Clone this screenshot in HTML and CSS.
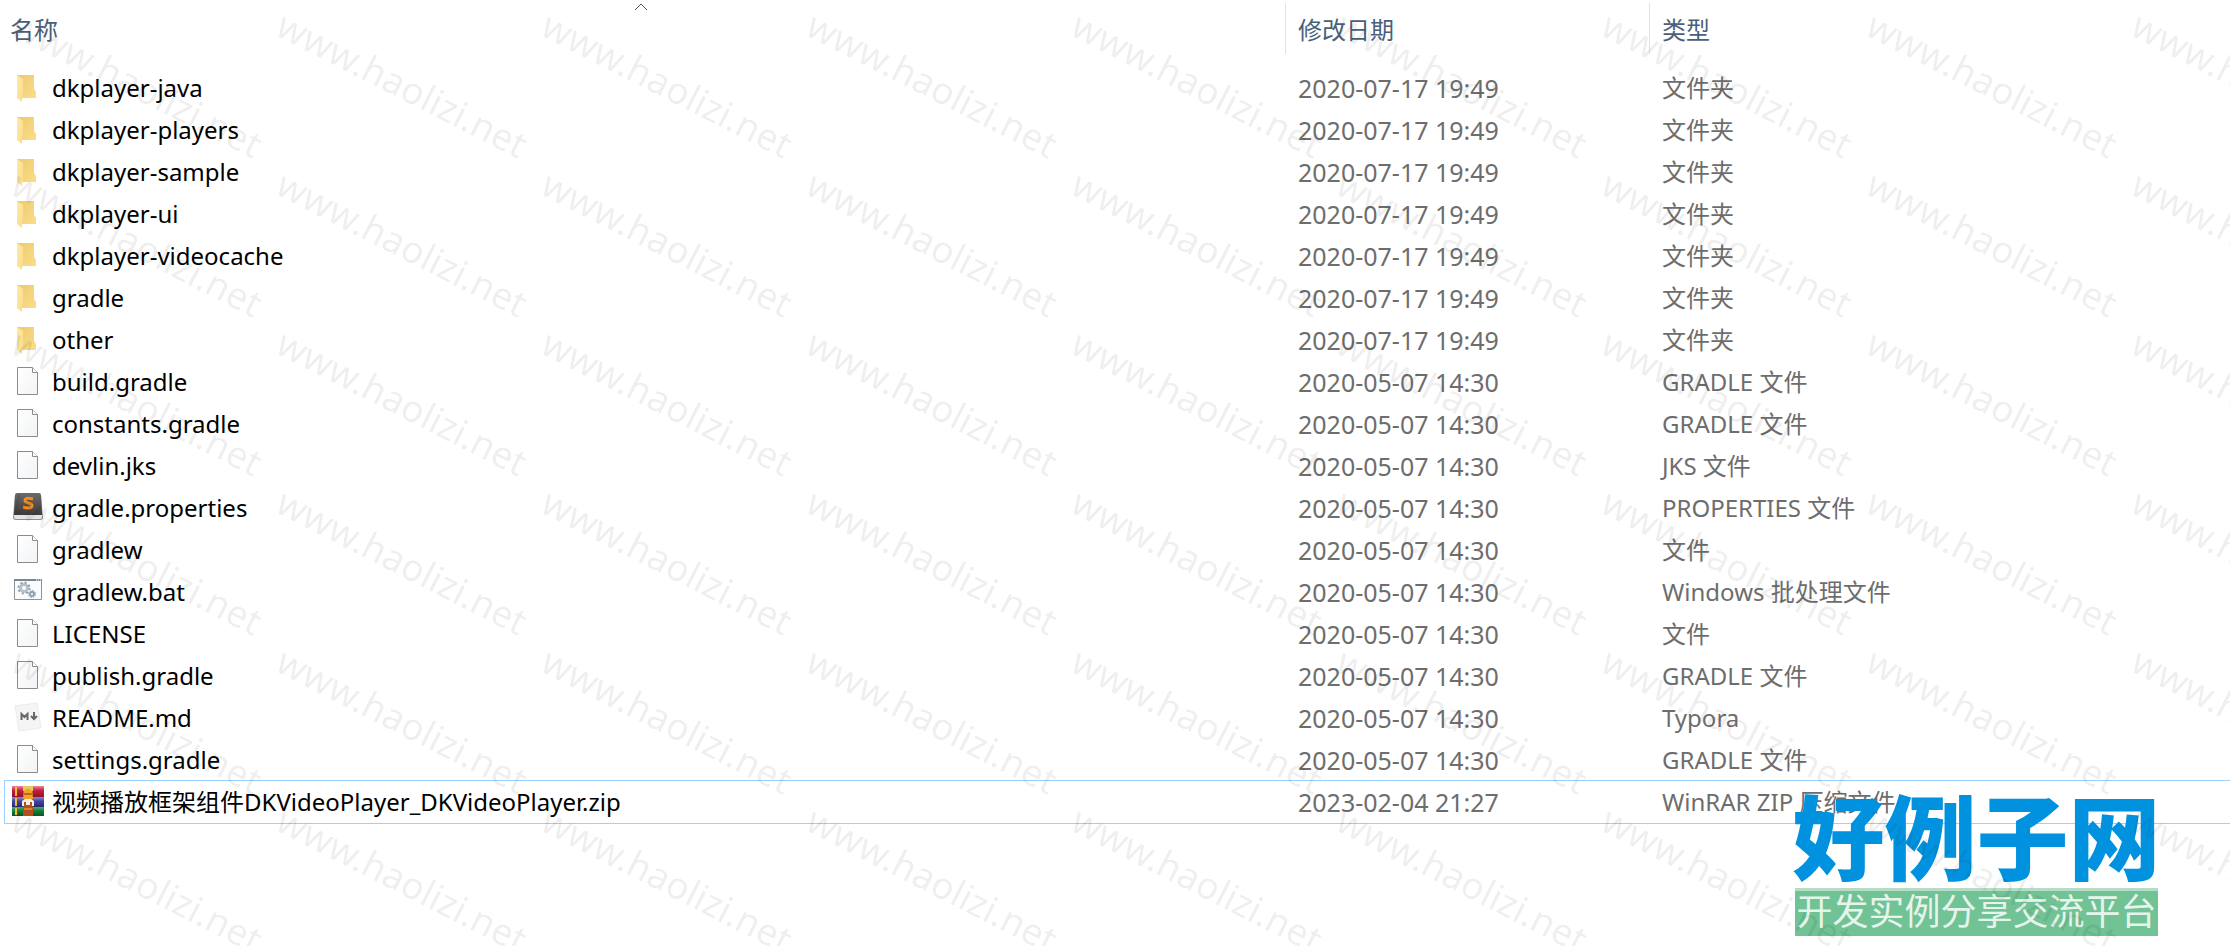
FILE: index.html
```html
<!DOCTYPE html>
<html lang="zh-CN">
<head>
  <meta charset="UTF-8" />
  <title>DKVideoPlayer</title>
  <link rel="stylesheet" href="styles.css">
</head>
<body>

  <!-- Icon shapes -->
  <svg class="sprite" aria-hidden="true">
    <defs>
      <linearGradient id="folder-back" x1="0" y1="0" x2="1" y2="1">
        <stop offset="0" stop-color="#eccb6d" />
        <stop offset="1" stop-color="#fbdc8a" />
      </linearGradient>
      <linearGradient id="folder-front" x1="0" y1="0" x2="1" y2="1">
        <stop offset="0" stop-color="#ffe8a8" />
        <stop offset="1" stop-color="#fbdc86" />
      </linearGradient>
      <linearGradient id="paper" x1="0" y1="0" x2="1" y2="1">
        <stop offset="0" stop-color="#ffffff" />
        <stop offset="1" stop-color="#f1f3f5" />
      </linearGradient>
      <linearGradient id="key" x1="0" y1="0" x2="0" y2="1">
        <stop offset="0" stop-color="#6a6a6a" />
        <stop offset="1" stop-color="#3c3c3c" />
      </linearGradient>
      <linearGradient id="book-red" x1="0" y1="0" x2="0" y2="1">
        <stop offset="0" stop-color="#e88a9c" />
        <stop offset="0.4" stop-color="#c4203f" />
        <stop offset="1" stop-color="#8c1028" />
      </linearGradient>
      <linearGradient id="book-blue" x1="0" y1="0" x2="0" y2="1">
        <stop offset="0" stop-color="#8a8ad8" />
        <stop offset="0.4" stop-color="#4646a8" />
        <stop offset="1" stop-color="#26266e" />
      </linearGradient>
      <linearGradient id="book-green" x1="0" y1="0" x2="0" y2="1">
        <stop offset="0" stop-color="#4fae72" />
        <stop offset="0.4" stop-color="#14803c" />
        <stop offset="1" stop-color="#0a5426" />
      </linearGradient>
    </defs>
    <symbol id="icon-folder" viewBox="0 0 32 32">
      <path d="M5 3h17v14l2 3v6H10z" fill="url(#folder-back)" />
      <path d="M5 3l6 4v15l-1 1v7l-5-4z" fill="url(#folder-front)" />
    </symbol>
    <symbol id="icon-file" viewBox="0 0 32 32">
      <path d="M5.500 1.500h15l5 5v22h-20z" fill="url(#paper)" stroke="#8c8c8c" />
      <path d="M20.500 1.500v5h5" fill="#fff" stroke="#8c8c8c" />
    </symbol>
    <symbol id="icon-sublime" viewBox="0 0 32 32">
      <path d="M3 3L1 25q0 3 3 3h24q3 0 3-3L29 3z" fill="#8f8f8f" />
      <path d="M2 23h28l0 2q0 2-2 2H4q-2 0-2-2z" fill="#e4e4e4" />
      <path d="M5 1h22q2 0 2 2l1 20H2L3 3q0-2 2-2z" fill="url(#key)" />
      <path d="M21 7q-8-2-8 1.500c0 3 7 2 7 5s-5 3-9 1.500" fill="none" stroke="#f58a1f" stroke-width="3" />
    </symbol>
    <symbol id="icon-bat" viewBox="0 0 32 32">
      <path d="M2.500 3.500h27v20h-27z" fill="#fafbfc" stroke="#8b949b" />
      <path d="M2 3h28v2H2z" fill="#7b868e" />
      <path d="M24 4h1M26 4h1M28 4h1" stroke="#fff" />
      <circle cx="12" cy="12" r="3.500" fill="#fff" stroke="#b3c2cd" stroke-width="3" />
      <circle cx="12" cy="12" r="5.500" fill="none" stroke="#8fa0ad" stroke-width="2" stroke-dasharray="2 2.320" />
      <circle cx="20" cy="18" r="2" fill="#fff" stroke="#8ea2b0" stroke-width="2" />
      <circle cx="20" cy="18" r="3.500" fill="none" stroke="#8295a2" stroke-dasharray="1.500 1.250" />
    </symbol>
    <symbol id="icon-markdown" viewBox="0 0 32 32">
      <path d="M3 4l22-3 4 25-22 3z" fill="#f5f5f5" stroke="#ececec" />
      <path d="M9.500 18v-6l3 3 3-3v6M22 10v6M19 14l3 3 3-3" fill="none" stroke="#666" stroke-width="2" />
    </symbol>
    <symbol id="icon-winrar" viewBox="0 0 32 32">
      <path d="M0 0h32v11H0z" fill="url(#book-red)" />
      <path d="M0 11h32v10H0z" fill="url(#book-blue)" />
      <path d="M0 21h32v9H0z" fill="url(#book-green)" />
      <path d="M4 1v9M4 12v8M4 22v7" stroke="#f0c030" stroke-width="2" />
      <path d="M11 0h10v30H11z" fill="#b4501e" />
      <path d="M11 0h10v5H11z" fill="#e8c860" />
      <path d="M12 5q4-5 8 0l1 8H11z" fill="#f2a227" />
      <path d="M12 8h8" stroke="#b86a14" stroke-width="2" />
      <path d="M10 15l3-2h6l3 2v5h-2v-4h-2v3h-4v-3h-2v4h-2z" fill="#f6efe4" />
      <path d="M12 22h8v2h-8z" fill="#d9822e" />
    </symbol>
  </svg>

  <!-- File list -->
  <main class="explorer">
    <table class="file-list">
      <colgroup>
        <col class="col-name">
        <col class="col-date">
        <col class="col-type">
      </colgroup>
      <thead>
        <tr>
          <th class="sorted">名称<svg class="caret" viewBox="0 0 14 8"><path d="M1 7l6-6 6 6" /></svg></th>
          <th>修改日期</th>
          <th>类型</th>
        </tr>
      </thead>
      <tbody>
        <tr><td><svg class="icon"><use href="#icon-folder" /></svg>dkplayer-java</td><td>2020-07-17 19:49</td><td>文件夹</td></tr>
        <tr><td><svg class="icon"><use href="#icon-folder" /></svg>dkplayer-players</td><td>2020-07-17 19:49</td><td>文件夹</td></tr>
        <tr><td><svg class="icon"><use href="#icon-folder" /></svg>dkplayer-sample</td><td>2020-07-17 19:49</td><td>文件夹</td></tr>
        <tr><td><svg class="icon"><use href="#icon-folder" /></svg>dkplayer-ui</td><td>2020-07-17 19:49</td><td>文件夹</td></tr>
        <tr><td><svg class="icon"><use href="#icon-folder" /></svg>dkplayer-videocache</td><td>2020-07-17 19:49</td><td>文件夹</td></tr>
        <tr><td><svg class="icon"><use href="#icon-folder" /></svg>gradle</td><td>2020-07-17 19:49</td><td>文件夹</td></tr>
        <tr><td><svg class="icon"><use href="#icon-folder" /></svg>other</td><td>2020-07-17 19:49</td><td>文件夹</td></tr>
        <tr><td><svg class="icon"><use href="#icon-file" /></svg>build.gradle</td><td>2020-05-07 14:30</td><td>GRADLE 文件</td></tr>
        <tr><td><svg class="icon"><use href="#icon-file" /></svg>constants.gradle</td><td>2020-05-07 14:30</td><td>GRADLE 文件</td></tr>
        <tr><td><svg class="icon"><use href="#icon-file" /></svg>devlin.jks</td><td>2020-05-07 14:30</td><td>JKS 文件</td></tr>
        <tr><td><svg class="icon"><use href="#icon-sublime" /></svg>gradle.properties</td><td>2020-05-07 14:30</td><td>PROPERTIES 文件</td></tr>
        <tr><td><svg class="icon"><use href="#icon-file" /></svg>gradlew</td><td>2020-05-07 14:30</td><td>文件</td></tr>
        <tr><td><svg class="icon"><use href="#icon-bat" /></svg>gradlew.bat</td><td>2020-05-07 14:30</td><td>Windows 批处理文件</td></tr>
        <tr><td><svg class="icon"><use href="#icon-file" /></svg>LICENSE</td><td>2020-05-07 14:30</td><td>文件</td></tr>
        <tr><td><svg class="icon"><use href="#icon-file" /></svg>publish.gradle</td><td>2020-05-07 14:30</td><td>GRADLE 文件</td></tr>
        <tr><td><svg class="icon"><use href="#icon-markdown" /></svg>README.md</td><td>2020-05-07 14:30</td><td>Typora</td></tr>
        <tr><td><svg class="icon"><use href="#icon-file" /></svg>settings.gradle</td><td>2020-05-07 14:30</td><td>GRADLE 文件</td></tr>
        <tr class="focused"><td><svg class="icon"><use href="#icon-winrar" /></svg>视频播放框架组件DKVideoPlayer_DKVideoPlayer.zip</td><td>2023-02-04 21:27</td><td>WinRAR ZIP 压缩文件</td></tr>
      </tbody>
    </table>
  </main>

  <!-- Site logo -->
  <div class="site-logo">
    <div class="site-name">好例子网</div>
    <div class="site-slogan">开发实例分享交流平台</div>
  </div>

  <!-- Watermark -->
  <div class="watermark" id="watermark" aria-hidden="true"></div>

  <script>
    const watermark = document.getElementById('watermark');
    for (let i = 0; i < 54; i++) {
      const mark = document.createElement('span');
      mark.textContent = 'www.haolizi.net';
      watermark.appendChild(mark);
    }
  </script>

</body>
</html>
```
FILE: styles.css
```css
/* Global Styles */
body {
  margin: 0;
  min-height: 100vh;
  position: relative;
  overflow: hidden;
  background-color: #ffffff;
  font-family: "Noto Sans", "Noto Sans CJK SC", sans-serif;
  font-size: 24px;
}

.sprite {
  display: block;
  width: 0;
  height: 0;
}

/* File list */
.explorer {
  padding-left: 5px;
}

.file-list {
  width: 100%;
  table-layout: fixed;
  border-collapse: collapse;
}

.col-name {
  width: 1280px;
}

.col-date {
  width: 364px;
}

th {
  height: 67px;
  padding: 0 0 10px 13px;
  box-sizing: border-box;
  text-align: left;
  font-weight: normal;
  color: #4a6079;
  background: linear-gradient(#e2e2e2, #e2e2e2) no-repeat 0 3px / 1px 51px;
}

th.sorted {
  position: relative;
  padding-left: 5px;
  background: none;
}

.caret {
  position: absolute;
  top: 3px;
  left: 50%;
  width: 14px;
  height: 8px;
  margin-left: -11px;
  fill: none;
  stroke: #555555;
}

td {
  height: 42px;
  padding: 0 0 0 13px;
  line-height: 42px;
  white-space: nowrap;
  color: #6d6d6d;
}

td:first-child {
  padding-left: 7px;
  color: #000000;
}

td:nth-child(2) {
  font-size: 25px;
}

.icon {
  width: 32px;
  height: 32px;
  margin: 5px 8px 5px 0;
  float: left;
}

.focused {
  outline: 1px solid #99d1ff;
}

/* Site logo */
.site-logo {
  position: absolute;
  right: 72px;
  bottom: 10px;
  width: 363px;
  text-align: center;
  white-space: nowrap;
}

.site-name {
  display: flex;
  justify-content: center;
  font-family: "Noto Sans CJK SC", sans-serif;
  font-size: 92px;
  font-weight: 900;
  line-height: 110px;
  color: #0092df;
}

.site-slogan {
  height: 48px;
  box-sizing: border-box;
  border-top: 3px solid #b5dcc5;
  font-size: 36px;
  line-height: 42px;
  color: #e6f5ec;
  background-color: #71c294;
}

/* Watermark */
.watermark {
  position: absolute;
  inset: 0;
  overflow: hidden;
  padding: 4px 0 0 24px;
  display: grid;
  grid-template-columns: repeat(9, 265px);
  grid-auto-rows: 159px;
  font-size: 37px;
  line-height: 40px;
  color: rgba(0, 0, 0, 0.08);
  pointer-events: none;
}

.watermark span {
  transform: rotate(27deg);
  transform-origin: 0 0;
}
```
